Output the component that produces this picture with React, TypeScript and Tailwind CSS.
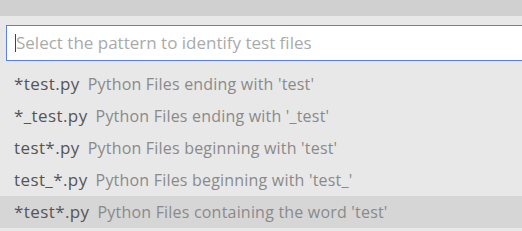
import React from 'react';

interface Pattern {
  label: string;
  description: string;
}

const patterns: Pattern[] = [
  { label: '*test.py', description: "Python Files ending with 'test'" },
  { label: '*_test.py', description: "Python Files ending with '_test'" },
  { label: 'test*.py', description: "Python Files beginning with 'test'" },
  { label: 'test_*.py', description: "Python Files beginning with 'test_'" },
  { label: '*test*.py', description: "Python Files containing the word 'test'" },
];

const App: React.FC = () => {
  const selected = 4;

  return (
    <div className="w-[522px] h-[231px] overflow-hidden bg-[#e8e8e8] font-['Open_Sans',sans-serif]">
      <div className="h-4 bg-[#d0d0d0]" />
      <div className="pt-[9px] pl-[6px]">
        <div className="h-9 border border-r-0 border-[#5a7cff] bg-white flex items-center pl-2">
          <span className="w-px h-[18px] bg-[#444]" />
          <span className="text-[17px] text-[#aaaaaa]">Select the pattern to identify test files</span>
        </div>
      </div>
      <div className="mt-[7px]">
        {patterns.map((p, i) => (
          <div
            key={p.label}
            className={`h-8 flex items-center pl-[14px] gap-2 ${i === selected ? 'bg-[#d6d6d6]' : ''}`}
          >
            <span className="text-[17px] text-[#555555] tracking-[0.4px]">{p.label}</span>
            <span className="text-[16px] text-[#8a8a8a] tracking-[0.2px]">{p.description}</span>
          </div>
        ))}
      </div>
    </div>
  );
};

export default App;
